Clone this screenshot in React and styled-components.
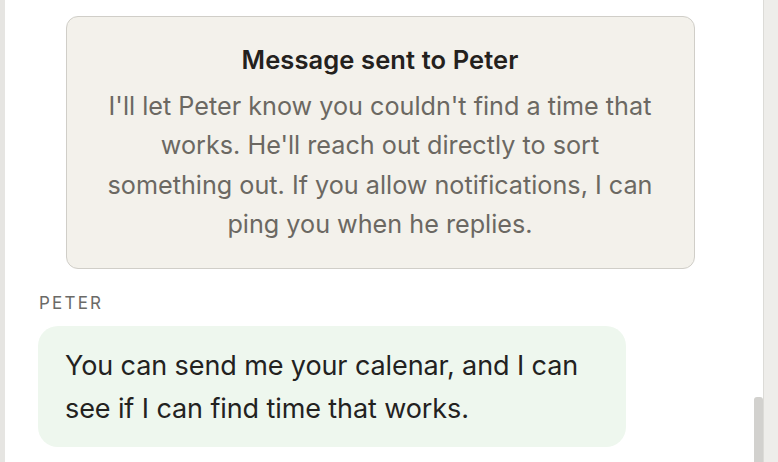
import styled, { createGlobalStyle } from "styled-components";

const GlobalStyle = createGlobalStyle`
    html, body {
        margin: 0;
        padding: 0;
        background: #ffffff;
    }
    #root {
        height: 462px;
    }
`;

const Page = styled.div`
    display: flex;
    height: 462px;
    width: 778px;
    overflow: hidden;
    font-family: "Inter", "Noto Sans", sans-serif;
`;

const LeftRail = styled.div`
    width: 5px;
    flex-shrink: 0;
    background: #e6e5e2;
`;

const ChatColumn = styled.div`
    position: relative;
    flex: 1;
    background: #ffffff;
    border-right: 1px solid #dcdbd7;
`;

const ChatScroll = styled.div`
    display: flex;
    flex-direction: column;
    padding: 16px 39px 0 33px;
`;

const SideRail = styled.div`
    width: 14px;
    flex-shrink: 0;
    background: #eeedea;
`;

const ScrollThumb = styled.div`
    position: absolute;
    right: 0;
    top: 397px;
    bottom: 0;
    width: 9px;
    background: #d2d1ce;
    border-radius: 3px 3px 0 0;
`;

const NoticeCard = styled.div`
    align-self: center;
    box-sizing: border-box;
    width: 629px;
    margin-left: -2px;
    height: 253px;
    padding: 25px 36px 0;
    background: #f3f1eb;
    border: 1.5px solid #d0cec8;
    border-radius: 12px;
    text-align: center;
`;

const NoticeTitle = styled.h3`
    margin: 0 0 9px;
    font-size: 25.5px;
    font-weight: 600;
    line-height: 36px;
    color: #24211d;
    letter-spacing: 0.1px;
`;

const NoticeText = styled.p`
    margin: 0;
    font-size: 25.2px;
    line-height: 39.3px;
    color: #6b6862;
    letter-spacing: 0;
`;

const SenderLabel = styled.div`
    margin: 23px 0 12px 1px;
    font-size: 17px;
    letter-spacing: 2.2px;
    line-height: 22px;
    color: #6b6a67;
`;

const Bubble = styled.div`
    box-sizing: border-box;
    width: 588px;
    padding: 18px 20px 17px 27px;
    background: ${(p) => p.$tint};
    border-radius: 20px;
    font-size: 27px;
    line-height: 43px;
    color: #23221f;
    letter-spacing: -0.1px;
`;

export default function App() {
    return (
        <>
            <GlobalStyle />
            <Page>
                <LeftRail />
                <ChatColumn>
                    <ChatScroll>
                        <NoticeCard>
                            <NoticeTitle>Message sent to Peter</NoticeTitle>
                            <NoticeText>
                                I'll let Peter know you couldn't find a time that works. He'll reach out directly to sort something out. If you allow notifications, I can ping you when he replies.
                            </NoticeText>
                        </NoticeCard>
                        <SenderLabel>PETER</SenderLabel>
                        <Bubble $tint="#eef7ee">
                            You can send me your calenar, and I can see if I can find time that works.
                        </Bubble>
                    </ChatScroll>
                    <ScrollThumb />
                </ChatColumn>
                <SideRail />
            </Page>
        </>
    );
}
